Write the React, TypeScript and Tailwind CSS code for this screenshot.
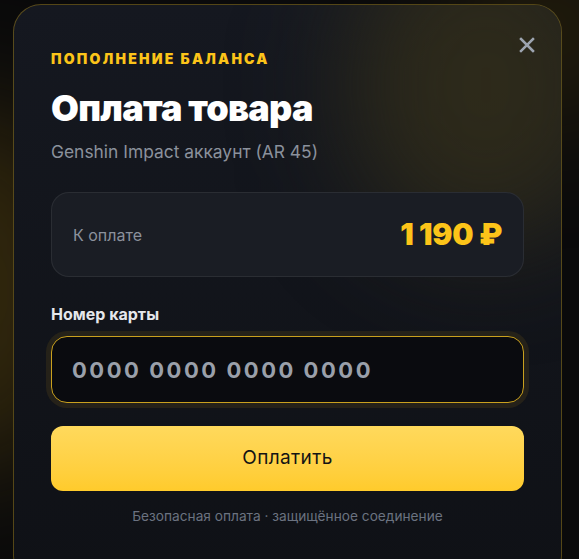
import React from 'react'

const font = { fontFamily: 'Inter, "Noto Sans", sans-serif' }

export default function App() {
  return (
    <div
      className="relative min-h-[559px] w-full overflow-hidden bg-[#0a0a0b] pt-[4px] pl-[13px]"
      style={font}
    >
      {/* background glows */}
      <div className="pointer-events-none absolute -left-[170px] top-[110px] h-[360px] w-[260px] rounded-full bg-[#6b5310]/40 blur-[60px]" />
      <div className="pointer-events-none absolute -right-[70px] -top-[70px] h-[200px] w-[200px] rounded-full bg-[#6b5310]/25 blur-[60px]" />

      <div className="relative h-[580px] w-[549px] overflow-hidden rounded-[28px] border border-[#f5c518]/30 bg-gradient-to-b from-[#151820] to-[#0f1116]">
        <div className="pointer-events-none absolute -right-[60px] -top-[80px] h-[320px] w-[270px] rounded-full bg-[#36301a]/75 blur-[55px]" />

        <button className="absolute right-[20px] top-[26px] flex h-[28px] w-[28px] items-center justify-center text-[#9ca3af]">
          <svg width="16" height="16" viewBox="0 0 16 16" fill="none" stroke="currentColor" strokeWidth="2.5" strokeLinecap="square">
            <path d="M2 2l12 12M14 2L2 14" />
          </svg>
        </button>

        <div className="relative flex flex-col px-[37px] pt-[45px]">
          <div className="text-[14px] font-black uppercase leading-[18px] tracking-[0.16em] text-[#fcc419]">
            Пополнение баланса
          </div>
          <h1 className="mt-[20px] text-[36px] font-black leading-[41px] tracking-[-0.02em] text-white">
            Оплата товара
          </h1>
          <p className="mt-[11px] text-[17.4px] leading-[23px] text-[#8b919c]">
            Genshin Impact аккаунт (AR 45)
          </p>

          <div className="mt-[29px] flex h-[85px] items-center justify-between rounded-[18px] border border-white/[0.07] bg-[#1a1d24] px-[21px]">
            <span className="text-[16px] text-[#8b919c]">К оплате</span>
            <span className="text-[30px] font-black tracking-[-0.01em] text-[#fcc419]">1 190 ₽</span>
          </div>

          <label className="mt-[27px] text-[16px] font-bold leading-[20px] text-[#e5e7eb]">Номер карты</label>
          <div className="-mx-[5px] mt-[7px] rounded-[21px] bg-[#2a2619]/80 p-[5px]">
            <input
              className="h-[67px] w-full rounded-[16px] border border-[#c9a01e] bg-[#0a0b0f] px-[20px] text-[22px] font-bold tracking-[0.115em] text-white outline-none placeholder:text-[#9aa0aa]"
              placeholder="0000 0000 0000 0000"
            />
          </div>

          <button className="mt-[18px] h-[65px] w-full rounded-[12px] bg-gradient-to-b from-[#ffd95c] to-[#ffcb2b] text-[19px] tracking-[0.02em] text-[#141414]">
            Оплатить
          </button>

          <p className="mt-[15px] text-center text-[13.7px] leading-[21px] text-[#6b7280]">
            Безопасная оплата · защищённое соединение
          </p>
        </div>
      </div>
    </div>
  )
}
